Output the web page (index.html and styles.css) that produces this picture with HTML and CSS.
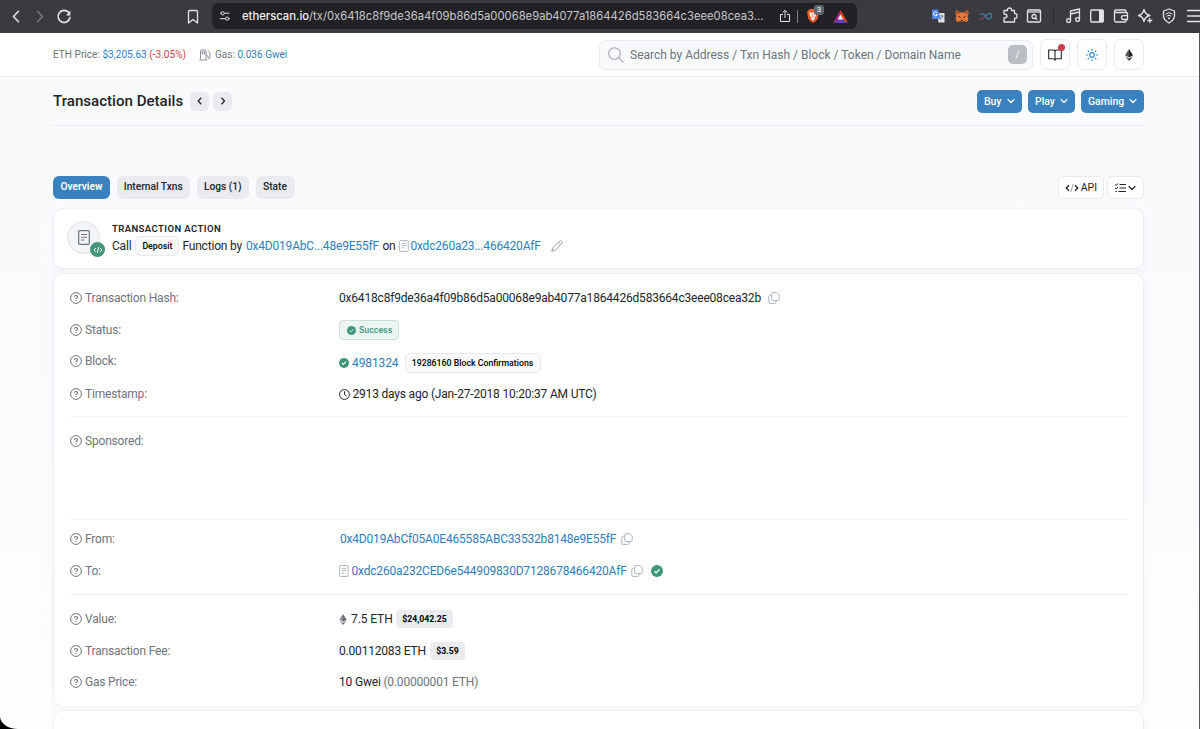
FILE: index.html
```html
<!DOCTYPE html>
<html lang="en">
<head>
<meta charset="utf-8">
<title>Transaction Details</title>
<link rel="stylesheet" href="styles.css">
</head>
<body>
<svg class="defs" aria-hidden="true">
  <symbol id="help" viewBox="0 0 12 12"><circle cx="6" cy="6" r="5.4" fill="none" stroke="currentColor" stroke-width="1"/><path d="M4.5 4.7C4.5 3.1 7.6 3.1 7.6 4.8C7.6 5.8 6 5.8 6 6.9" fill="none" stroke="currentColor" stroke-width="1.1"/><circle cx="6" cy="8.6" r=".7" fill="currentColor"/></symbol>
  <symbol id="copy" viewBox="0 0 12 12"><path d="M4.8.6H8.6L11.2 3V7.4Q11.2 8.6 10 8.6H4.8Q3.7 8.6 3.7 7.5V1.7Q3.7.6 4.8.6ZM3.6 3.2H2Q.8 3.2.8 4.4V10.2Q.8 11.4 2 11.4H6.9Q8 11.4 8 10.2V8.8" fill="none" stroke="currentColor"/></symbol>
  <symbol id="check" viewBox="0 0 12 12"><circle cx="6" cy="6" r="6" fill="#3f967a"/><path d="M3.5 6.2L5.2 7.8L8.5 4.4" fill="none" stroke="#fff" stroke-width="1.3"/></symbol>
  <symbol id="doc" viewBox="0 0 10 12"><rect x=".6" y=".6" width="8.6" height="10.8" rx="1" fill="none" stroke="currentColor"/><path d="M2.5 3.4H7.3M2.5 5.6H7.3M2.5 7.8H5.3" stroke="currentColor" stroke-width=".9"/></symbol>
  <symbol id="down" viewBox="0 0 8 8"><path d="M1 2.5L4 5.5L7 2.5" fill="none" stroke="currentColor" stroke-width="1.2" stroke-linecap="round" stroke-linejoin="round"/></symbol>
  <symbol id="eth" viewBox="0 0 8 12"><path d="M4 0L0 6.3L4 8.5Z" fill="currentColor" opacity=".75"/><path d="M4 0L8 6.3L4 8.5Z" fill="currentColor"/><path d="M0 7.3L4 9.6V12Z" fill="currentColor" opacity=".75"/><path d="M8 7.3L4 9.6V12Z" fill="currentColor"/></symbol>
</svg>

<div class="toolbar">
  <div class="nav">
    <svg width="24" height="20" viewBox="0 0 24 20"><path d="M14.500 4.300L9.500 9.500L14.500 14.700" class="line thick"/></svg>
    <svg width="24" height="20" viewBox="0 0 24 20"><path d="M9.500 4.300L14.500 9.500L9.500 14.700" class="line thick dim"/></svg>
    <svg width="24" height="20" viewBox="0 0 24 20"><path d="M16.500 5.300A6 6 0 1 0 18 10.500" class="line thick"/><path d="M18.300 3.500V8.500H14Z" fill="#e4e4e7"/></svg>
  </div>
  <svg class="bookmark" width="12" height="16" viewBox="0 0 12 16"><path d="M1.500 2.500Q1.500 1.500 2.500 1.500H9.500Q10.500 1.500 10.500 2.500V14L6 10.500L1.500 14Z" class="line"/></svg>
  <div class="url">
    <svg class="tune" width="12" height="10" viewBox="0 0 12 10"><path d="M1 2.200H2.100M5.500 2.200H10.500M1 7.700H6.200M9.800 7.700H11" class="line fine"/><circle cx="3.700" cy="2.300" r="1.600" class="line fine"/><circle cx="8" cy="7.600" r="1.600" class="line fine"/></svg>
    <span class="address"><b>etherscan.io</b>/tx/0x6418c8f9de36a4f09b86d5a00068e9ab4077a1864426d583664c3eee08cea3...</span>
    <svg class="share" width="12" height="14" viewBox="0 0 12 14"><path d="M4 5.500H1.500V12.500H10.500V5.500H8M6 9V1.500M3.700 3.600L6 1.300L8.300 3.600" class="line fine"/></svg>
    <i class="url-sep"></i>
    <span class="shield">
      <svg width="14" height="16" viewBox="0 0 14 16"><path d="M4 1H10L13 3.500L11.800 10.500Q11 12.500 7 15Q3 12.500 2.200 10.500L1 3.500Z" fill="#f0592b"/><path d="M3.300 4.200L7 4.800L10.700 4.200L10 8L8.300 9.500L9 11L7 12.500L5 11L5.700 9.500L4 8Z" fill="#fff"/><path d="M5 6L6.500 6.600M9 6L7.500 6.600M7 7V9.500" stroke="#f0592b" stroke-width=".8"/></svg>
      <em>3</em>
    </span>
    <svg class="bat" width="15" height="13" viewBox="0 0 15 13"><path d="M7.500 0L0 13L7.500 8Z" fill="#a32a8b"/><path d="M7.500 0L15 13L7.500 8Z" fill="#ff4724"/><path d="M0 13H15L7.500 8.500Z" fill="#6542bd"/><path d="M7.500 4.600L4.800 9.400H10.200Z" fill="#fff"/></svg>
  </div>
  <div class="extensions">
    <svg width="24" height="20" viewBox="0 0 24 20"><path d="M11 7H18.500V16.500H12.500Z" fill="#dfe3e6"/><path d="M13.500 10H17.500M15.500 9V10M14 14L17 10" stroke="#68818f" fill="none"/><path d="M6 3.500H12L14.500 13H6Z" fill="#4f83e8"/><path d="M11 6.700A2 2 0 1 0 11.300 8.500H9.500" stroke="#fff" fill="none"/></svg>
    <svg width="24" height="20" viewBox="0 0 24 20"><path d="M6 4L10.500 6.500H13.500L18 4L18.500 8L17.500 10L18.500 13L17 16L13.500 15L12 16L10.500 15L7 16L5.500 13L6.500 10L5.500 8Z" fill="#e77837"/><path d="M6 4L10.500 6.500L9 8L5.500 8ZM18 4L13.500 6.500L15 8L18.500 8Z" fill="#b5552c"/><path d="M8.500 10.500L10.500 11.500M15.500 10.500L13.500 11.500M11 14.500H13" stroke="#29282c" stroke-width="1"/></svg>
    <svg width="24" height="20" viewBox="0 0 24 20"><path d="M5.500 12Q5.500 14 8 13Q9.500 12 12 9" fill="none" stroke="#8e3f78" stroke-width="1.200"/><path d="M6.500 8.500Q9 6.500 11.500 10.300Q14 14.500 16.600 12.300Q19 9 16 7.500Q13.500 6.800 11.500 10.300" fill="none" stroke="#397fa2" stroke-width="1.400"/></svg>
    <svg width="24" height="20" viewBox="0 0 24 20"><path d="M6 4.500H9.500Q9 2 11.500 2Q14 2 13.500 4.500H16.500V7.700Q19 7.200 19 10Q19 12.800 16.500 12.200V16H6V12Q9 12 9 10Q9 8 6 8Z" class="line"/></svg>
    <svg width="24" height="20" viewBox="0 0 24 20"><rect x="5.500" y="4" width="13" height="12" rx="1" class="line"/><path d="M5.500 6H18.500" class="line"/><circle cx="12" cy="10.500" r="2" class="line"/><path d="M13.500 12L15 13.700" class="line"/></svg>
    <i class="ext-sep"></i>
    <svg width="24" height="20" viewBox="0 0 24 20"><path d="M9.500 14V5L18.500 3V13M9.500 8L18.500 6" class="line"/><circle cx="7.600" cy="14.500" r="1.900" class="line"/><circle cx="16.600" cy="13.500" r="1.900" class="line"/></svg>
    <svg width="24" height="20" viewBox="0 0 24 20"><rect x="5.700" y="4" width="12.600" height="12" rx="1" class="line"/><path d="M14 4H18V16H14Z" fill="#e4e4e7"/></svg>
    <svg width="24" height="20" viewBox="0 0 24 20"><path d="M17 7V5Q17 4 16 4H7Q5.500 4 5.500 6V14Q5.500 16 7 16H16Q17 16 17 15V13.500M5.500 6.500H17Q18.500 6.500 18.500 8V13.500H14.500Q12.500 13.500 12.500 11.500Q12.500 9.700 14.500 9.700H18.500" class="line"/></svg>
    <svg width="24" height="20" viewBox="0 0 24 20"><path d="M11 3.500Q12 8.500 17 9.500Q12 10.500 11 15.500Q10 10.500 5.500 9.500Q10 8.500 11 3.500ZM16.800 12V17M14.300 14.500H19.300" class="line"/></svg>
    <svg width="24" height="20" viewBox="0 0 24 20"><path d="M12 3L17.500 5V9.500Q17.500 14 12 17Q6.500 14 6.500 9.500V5Z" class="line"/><path d="M8.700 8Q12 5.500 15.300 8M9.800 10.200Q12 8.400 14.200 10.200" class="line fine"/><circle cx="12" cy="12.300" r="1" fill="#e4e4e7"/></svg>
    <svg width="24" height="20" viewBox="0 0 24 20"><path d="M6 4.500H24M6 10H24M6 15.500H24" class="line"/></svg>
  </div>
</div>

<div class="page">
  <header class="top">
    <div class="prices">
      <span class="eth-price">ETH Price: <a>$3,205.63</a> <span class="red">(-3.05%)</span></span>
      <svg class="pump" width="12" height="12" viewBox="0 0 12 12"><path d="M1.500 10.500V2Q1.500 1 2.500 1H6Q7 1 7 2V10.500M.3 11H8.200M3 2.800H5.500V5H3ZM7 6.500H8Q9 6.500 9 8Q9 9.500 10 9.500Q11 9.500 11 8V4L9 1.500" fill="none" stroke="currentColor"/></svg>
      <span class="gas">Gas: <a>0.036 Gwei</a></span>
    </div>
    <div class="search">
      <svg width="16" height="16" viewBox="0 0 16 16"><circle cx="6.500" cy="6.500" r="5.800" fill="none" stroke="#a1a6ac" stroke-width="1.100"/><path d="M10.700 10.700L15.300 15.300" stroke="#a1a6ac" stroke-width="1.200"/></svg>
      <span class="placeholder">Search by Address / Txn Hash / Block / Token / Domain Name</span>
      <kbd>/</kbd>
    </div>
    <span class="square book"><svg width="14" height="12" viewBox="0 0 14 12"><path d="M7 10.500V2Q6.500 1 5 1H.7V9.800H5Q6.500 9.800 7 11Q7.500 9.800 9 9.800H13.300V1H9Q7.500 1 7 2" fill="none" stroke="#212529" stroke-width="1.100"/></svg><i></i></span>
    <span class="square"><svg width="12" height="12" viewBox="0 0 12 12"><g fill="none" stroke="#2f86cc" stroke-width="1.200"><circle cx="6" cy="6" r="2.300"/><path d="M6 0V1.800M6 10.200V12M0 6H1.800M10.200 6H12M1.700 1.700L3 3M9 9L10.300 10.300M10.300 1.700L9 3M3 9L1.700 10.300"/></g></svg></span>
    <span class="square dark"><svg width="8" height="12"><use href="#eth"/></svg></span>
  </header>

  <main>
    <div class="title-row">
      <h1>Transaction Details</h1>
      <span class="step"><svg width="8" height="10" viewBox="0 0 8 10"><path d="M5.200 1.700L2.200 5L5.200 8.300" fill="none" stroke="#212529" stroke-width="1.300"/></svg></span>
      <span class="step"><svg width="8" height="10" viewBox="0 0 8 10"><path d="M2.500 1.700L5.500 5L2.500 8.300" fill="none" stroke="#212529" stroke-width="1.300"/></svg></span>
      <span class="blue buy">Buy <svg width="8" height="8"><use href="#down"/></svg></span>
      <span class="blue play">Play <svg width="8" height="8"><use href="#down"/></svg></span>
      <span class="blue gaming">Gaming <svg width="8" height="8"><use href="#down"/></svg></span>
    </div>

    <div class="tabs">
      <span class="tab active overview">Overview</span>
      <span class="tab internal">Internal Txns</span>
      <span class="tab logs">Logs (1)</span>
      <span class="tab state">State</span>
      <span class="small api"><svg width="14" height="10" viewBox="0 0 14 10"><path d="M4 2.300L1.300 5L4 7.700M10 2.300L12.700 5L10 7.700" fill="none" stroke="#212529" stroke-width="1.400"/><path d="M8.200 .8L5.800 9.200" stroke="#9a9da1"/></svg> API</span>
      <span class="small list"><svg width="11" height="10" viewBox="0 0 11 10"><path d="M0 1.500L1.200 2.500L3 .5M0 5L1.200 6L3 4M4.500 1.500H11M4.500 5H11M3.500 8.500H11M.5 8.500H2" fill="none" stroke="#212529"/></svg><svg width="8" height="8"><use href="#down"/></svg></span>
    </div>

    <section class="card action">
      <span class="avatar">
        <svg width="12" height="15" viewBox="0 0 12 15"><rect x=".7" y=".7" width="10.600" height="13.600" rx="1" fill="none" stroke="#6c757d" stroke-width="1.200"/><path d="M3 4.500H9M3 7.200H9M3 10H6.500" stroke="#6c757d" stroke-width="1.100"/></svg>
        <i><svg width="10" height="8" viewBox="0 0 10 8"><path d="M2.800 2L1 4L2.800 6M7.200 2L9 4L7.200 6M5.700 1L4.300 7" fill="none" stroke="#fff"/></svg></i>
      </span>
      <div class="action-text">
        <div class="caps">TRANSACTION ACTION</div>
        <div class="call"><span>Call</span><span class="pill deposit">Deposit</span><span class="fn">Function by</span><a class="who">0x4D019AbC...48e9E55fF</a><span class="on">on</span><svg class="muted" width="10" height="12"><use href="#doc"/></svg><a class="contract">0xdc260a23...466420AfF</a><svg class="pencil" width="12" height="12" viewBox="0 0 12 12"><path d="M.8 11.200L1.600 8L8.600 1Q9.600.2 10.700 1.300Q11.800 2.400 11 3.400L4 10.400ZM7.400 2.200L9.800 4.600" fill="none" stroke="currentColor"/></svg></div>
      </div>
    </section>

    <section class="card details">
      <div class="row"><span class="label"><svg width="12" height="12"><use href="#help"/></svg>Transaction Hash:</span><span class="hash">0x6418c8f9de36a4f09b86d5a00068e9ab4077a1864426d583664c3eee08cea32b</span><svg class="copy muted" width="12" height="12"><use href="#copy"/></svg></div>
      <div class="row"><span class="label"><svg width="12" height="12"><use href="#help"/></svg>Status:</span><span class="success"><svg width="9" height="9"><use href="#check"/></svg>Success</span></div>
      <div class="row block"><span class="label"><svg width="12" height="12"><use href="#help"/></svg>Block:</span><svg width="10" height="10"><use href="#check"/></svg><a class="number">4981324</a><span class="pill confirmations">19286160 Block Confirmations</span></div>
      <div class="row"><span class="label"><svg width="12" height="12"><use href="#help"/></svg>Timestamp:</span><svg width="11" height="11" viewBox="0 0 11 11"><circle cx="5.500" cy="5.500" r="4.900" fill="none" stroke="#212529"/><path d="M5.500 2.300V5.700L7.600 7" fill="none" stroke="#212529"/></svg><span class="time">2913 days ago (Jan-27-2018 10:20:37 AM UTC)</span></div>
      <hr class="after-time">
      <div class="row sponsored"><span class="label"><svg width="12" height="12"><use href="#help"/></svg>Sponsored:</span></div>
      <hr class="after-sponsored">
      <div class="row"><span class="label"><svg width="12" height="12"><use href="#help"/></svg>From:</span><a class="from">0x4D019AbCf05A0E465585ABC33532b8148e9E55fF</a><svg class="copy muted" width="12" height="12"><use href="#copy"/></svg></div>
      <div class="row"><span class="label"><svg width="12" height="12"><use href="#help"/></svg>To:</span><svg class="muted" width="10" height="12"><use href="#doc"/></svg><a class="to">0xdc260a232CED6e544909830D7128678466420AfF</a><svg class="copy muted" width="12" height="12"><use href="#copy"/></svg><svg class="verified" width="12" height="12"><use href="#check"/></svg></div>
      <hr class="after-to">
      <div class="row"><span class="label"><svg width="12" height="12"><use href="#help"/></svg>Value:</span><svg class="diamond" width="8" height="11"><use href="#eth"/></svg><span class="value">7.5 ETH</span><span class="usd">$24,042.25</span></div>
      <div class="row fee"><span class="label"><svg width="12" height="12"><use href="#help"/></svg>Transaction Fee:</span><span class="fee-value">0.00112083 ETH</span><span class="usd small-usd">$3.59</span></div>
      <div class="row"><span class="label"><svg width="12" height="12"><use href="#help"/></svg>Gas Price:</span><span class="gas-price">10 Gwei <span class="grey">(0.00000001 ETH)</span></span></div>
    </section>
    <section class="card next"></section>
  </main>
</div>
</body>
</html>
```

FILE: styles.css
```css
* { box-sizing: border-box; }
body {
  margin: 0;
  width: 1200px;
  height: 729px;
  overflow: hidden;
  background: #000;
  color: #212529;
  font-family: Roboto, "Liberation Sans", sans-serif;
  font-size: 12px;
  display: flex;
  flex-direction: column;
}
.defs { position: absolute; width: 0; height: 0; }
svg { display: block; flex: none; }
a { color: #2f7dbb; }
span { white-space: nowrap; }

.toolbar {
  height: 33px;
  flex: none;
  display: flex;
  align-items: center;
  background: #3b3a3f;
  overflow: hidden;
  padding-left: 4px;
}
.line { fill: none; stroke: #e4e4e7; stroke-width: 1.3; stroke-linejoin: round; }
.thick { stroke-width: 1.6; stroke-linecap: round; }
.fine { stroke-width: 1; }
.dim { stroke: #77767b; }
.nav { display: flex; flex: none; width: 183px; }
.bookmark { margin-right: 13px; }
.url {
  flex: none;
  width: 645px;
  height: 26px;
  margin-bottom: 1px;
  border-radius: 6px;
  background: #222126;
  display: flex;
  align-items: center;
  padding-left: 7px;
}
.address {
  flex: none;
  width: 537px;
  margin-left: 11px;
  color: #c9c9cd;
  font: 11.25px Inter, sans-serif;
}
.address b { font-weight: 500; color: #f1f1f3; }
.url-sep { width: 1px; height: 13px; background: #7d7c82; margin: 0 8px 0 6px; }
.shield { position: relative; display: block; width: 27px; }
.shield em {
  position: absolute;
  left: 8px;
  top: -3px;
  width: 10px;
  height: 10px;
  border-radius: 3px;
  background: #5d6670;
  color: #fff;
  font: 8px/10px Roboto, sans-serif;
  text-align: center;
}
.extensions { display: flex; flex: none; align-items: center; margin-left: 69px; margin-bottom: 1px; }
.ext-sep { width: 1px; height: 13px; background: #242328; margin: 0 7px; }

.page {
  flex: 1;
  width: 1200px;
  background: linear-gradient(#f9fafc, #fafbfd 60%, #fefefe);
  border-right: 1px solid #55565a;
  border-bottom-left-radius: 18px 13px;
  overflow: hidden;
}
.top {
  height: 44px;
  background: #fff;
  border-bottom: 1px solid #e9ecef;
  display: flex;
  align-items: center;
  padding-left: 53px;
}
.prices { display: flex; align-items: center; width: 546px; font-size: 10.05px; color: #6c757d; }
.eth-price { width: 146px; font-size: 10.1px; }
.pump { color: #8b9299; margin-right: 4px; }
.red { color: #ca444e; }
.search {
  width: 434px;
  height: 30px;
  border: 1px solid #e9ecef;
  border-radius: 6px;
  background: #f8f9fb;
  display: flex;
  align-items: center;
  padding-left: 8px;
  margin-right: 7px;
}
.placeholder { width: 378px; margin-left: 6px; color: #6c757d; }
kbd {
  width: 19px;
  height: 19px;
  border-radius: 5px;
  background: #b9bec5;
  color: #fff;
  font: 10px/19px Roboto, sans-serif;
  text-align: center;
}
.square {
  position: relative;
  width: 30px;
  height: 31px;
  margin-right: 7px;
  border: 1px solid #e9ecef;
  border-radius: 6px;
  display: flex;
  align-items: center;
  justify-content: center;
}
.book i { position: absolute; right: 4px; top: 4px; width: 7px; height: 7px; border-radius: 50%; background: #cf3f4b; }

main { width: 1091px; margin-left: 53px; }
.title-row {
  height: 49px;
  border-bottom: 1px solid #e9ecef;
  display: flex;
  align-items: center;
}
h1 { margin: 0; width: 137px; font-size: 15.1px; font-weight: 500; white-space: nowrap; }
.step {
  width: 19px;
  height: 19px;
  margin-right: 4px;
  border-radius: 5px;
  background: #e9ebee;
  display: flex;
  align-items: center;
  justify-content: center;
}
.blue {
  height: 23px;
  border-radius: 5px;
  background: #3a82bf;
  color: #fff;
  font-size: 10.4px;
  font-weight: 500;
  display: flex;
  align-items: center;
  justify-content: space-between;
  padding: 0 7px;
}
.buy { width: 45px; margin-left: auto; }
.play { width: 47px; margin-left: 6px; }
.gaming { width: 63px; margin-left: 6px; }

.tabs { height: 23px; margin-top: 50px; display: flex; align-items: center; }
.tab {
  height: 23px;
  border-radius: 6px;
  background: #e9ebee;
  font-size: 10.2px;
  font-weight: 500;
  line-height: 22px;
  text-align: center;
  margin-right: 6.5px;
}
.active { background: #3a82bf; color: #fff; font-weight: 600; }
.overview { width: 57px; }
.internal { width: 73.5px; }
.logs { width: 52.5px; }
.state { width: 39px; }
.small {
  height: 23px;
  border: 1px solid #e9ecef;
  border-radius: 5px;
  background: #fff;
  display: flex;
  align-items: center;
  justify-content: space-between;
  font-size: 10.5px;
  padding: 0 6px;
}
.api { width: 46px; margin-left: auto; margin-right: 3px; }
.list { width: 37px; padding: 0 7px; }

.card {
  background: #fff;
  border: 1px solid #edf0f3;
  border-radius: 10px;
  box-shadow: 0 3px 10px rgba(150, 160, 180, .09);
}
.action { height: 61px; margin-top: 9px; display: flex; padding: 12px 0 0 13px; }
.action-text { padding-top: 1px; }
.avatar {
  position: relative;
  width: 33px;
  height: 33px;
  margin-right: 12px;
  border: 1px solid #e1e4e7;
  border-radius: 50%;
  background: #f4f5f7;
  display: flex;
  align-items: center;
  justify-content: center;
}
.avatar i {
  position: absolute;
  right: -6px;
  bottom: -4px;
  width: 15px;
  height: 15px;
  border-radius: 50%;
  background: #3f967a;
  display: flex;
  align-items: center;
  justify-content: center;
}
.caps { font-size: 9.5px; font-weight: 600; line-height: 14px; letter-spacing: .42px; }
.call { height: 20px; display: flex; align-items: center; letter-spacing: -.19px; }
.pill {
  height: 20px;
  border: 1px solid #e7e9ec;
  border-radius: 5px;
  background: #f9fafb;
  color: #000;
  font-size: 8.8px;
  font-weight: 500;
  line-height: 18px;
  letter-spacing: 0;
  text-align: center;
}
.deposit { width: 44px; margin: 0 3px 0 4px; }
.fn { width: 63.5px; }
.who { width: 136.5px; }
.on { width: 17px; }
.contract { width: 141px; margin-left: 1px; }
.muted { color: #adb5bd; }
.pencil { color: #979fa6; }

.details { height: 434px; margin-top: 4px; padding: 8px 15px 0 16px; letter-spacing: -.19px; }
.row { height: 32px; display: flex; align-items: center; }
.label { width: 269px; display: flex; align-items: center; gap: 3px; color: #6c757d; }
.hash { width: 429px; }
.success {
  width: 60px;
  height: 20px;
  border: 1px solid #c8e2d9;
  border-radius: 4px;
  background: #ecf5f2;
  color: #3f967a;
  font-size: 8.8px;
  font-weight: 500;
  letter-spacing: 0;
  display: flex;
  align-items: center;
  gap: 3px;
  padding-left: 7px;
}
.block { padding-top: 2px; }
.block .label { margin-bottom: 4px; }
.number { width: 52.5px; margin-left: 3px; letter-spacing: -.1px; }
.confirmations { width: 136px; font-size: 8.75px; }
.time { margin-left: 2.5px; }
hr { margin: 0; border: 0; height: 1px; background: #eef0f2; }
.after-time { margin: 6px 0 8px; }
.after-sponsored { margin: 62px 0 3px; }
.from { width: 281px; margin-left: 1px; }
.to { width: 279.5px; margin-left: 2.5px; }
.verified { margin-left: 8px; }
.after-to { margin: 7px 0 8px; }
.diamond { color: #62676d; }
.value { width: 45px; margin-left: 4px; letter-spacing: -.1px; }
.usd {
  width: 57px;
  height: 18px;
  border-radius: 4px;
  background: #e9ebee;
  color: #000;
  font-size: 8.7px;
  font-weight: 700;
  line-height: 18px;
  letter-spacing: 0;
  text-align: center;
}
.fee-value { width: 91px; }
.small-usd { width: 35px; }
.fee { height: 31px; }
.grey { color: #6c757d; }
.next { height: 60px; margin-top: 3px; }
```
